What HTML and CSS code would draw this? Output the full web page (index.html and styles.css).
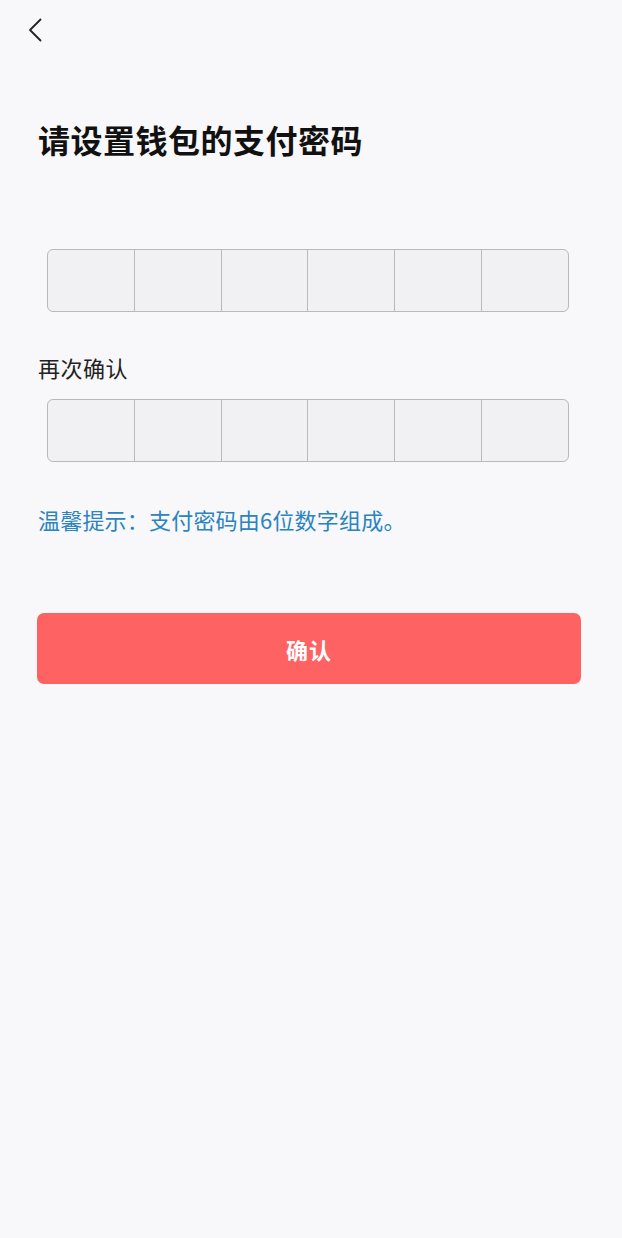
FILE: index.html
```html
<!DOCTYPE html>
<html lang="zh-CN">
<head>
    <meta charset="UTF-8">
    <meta name="viewport" content="width=device-width, initial-scale=1.0">
    <title>设置支付密码</title>
    <link rel="stylesheet" href="styles.css">
</head>
<body>
    <div class="page">
        <div class="nav">
            <svg class="back" width="14" height="24" viewBox="0 0 14 24">
                <path d="M12.5 1.5 L2 12 L12.5 22.5" fill="none" stroke="#222" stroke-width="1.8" stroke-linecap="round" stroke-linejoin="round"/>
            </svg>
        </div>

        <h1 class="title">请设置钱包的支付密码</h1>

        <div class="pin">
            <div class="cell"></div>
            <div class="cell"></div>
            <div class="cell"></div>
            <div class="cell"></div>
            <div class="cell"></div>
            <div class="cell"></div>
        </div>

        <div class="label">再次确认</div>

        <div class="pin">
            <div class="cell"></div>
            <div class="cell"></div>
            <div class="cell"></div>
            <div class="cell"></div>
            <div class="cell"></div>
            <div class="cell"></div>
        </div>

        <div class="tip">温馨提示：支付密码由6位数字组成。</div>

        <button class="confirm">确认</button>
    </div>
</body>
</html>
```

FILE: styles.css
```css
body {
    margin: 0;
    background: #f8f7f9;
    font-family: "Noto Sans CJK SC", "Noto Sans", sans-serif;
}

.page {
    display: flex;
    flex-direction: column;
    padding: 0 41px 0 37px;
}

.nav {
    height: 64px;
    display: flex;
    align-items: center;
    margin-top: -2px;
}

.back {
    margin-left: -9px;
    display: block;
}

.title {
    margin: 53px 0 0 1px;
    font-size: 32px;
    font-weight: bold;
    line-height: 48px;
    letter-spacing: 0.5px;
    color: #111;
}

.pin {
    display: flex;
    margin: 0 12px 0 10px;
    height: 63px;
    border: 1px solid #b9b8bb;
    border-radius: 6px;
    background: #f1f0f2;
    box-sizing: border-box;
    overflow: hidden;
}

.title + .pin {
    margin-top: 86px;
}

.cell {
    flex: 1;
    border-right: 1px solid #b9b8bb;
}

.cell:last-child {
    border-right: none;
}

.label {
    margin: 40px 0 0 1px;
    font-size: 22px;
    line-height: 30px;
    letter-spacing: 0.5px;
    color: #222;
    padding-bottom: 17px;
}

.tip {
    margin: 42px 0 0 1px;
    font-size: 22px;
    line-height: 30px;
    color: #2a84c0;
    letter-spacing: 0.2px;
}

.confirm {
    margin: 79px 0 0 0;
    height: 71px;
    border: none;
    border-radius: 7px;
    background: #ff6262;
    color: #fff;
    font-family: inherit;
    font-size: 22px;
    font-weight: bold;
    letter-spacing: 1px;
}
```
